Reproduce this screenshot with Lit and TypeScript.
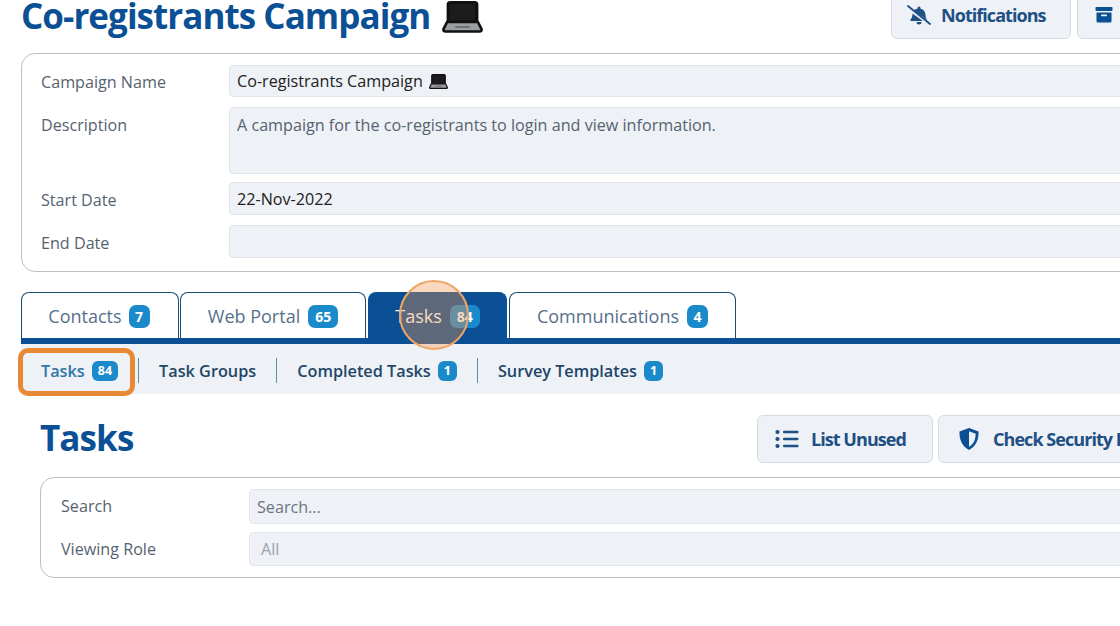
import { LitElement, html, css } from "lit";
import { customElement } from "lit/decorators.js";

const laptop = (w: number, h: number) => html`<svg class="laptop" width=${w} height=${h} viewBox="0 0 40 32" preserveAspectRatio="none">
  <path d="M6 3.500 Q6 1.500 8 1.500 H32 Q34 1.500 34 3.500 V21 H6 Z" fill="#1c1c1c" stroke="#111" stroke-width="3"/>
  <path d="M5 21 H35 L38.500 28 Q39 30.500 36.500 30.500 H3.500 Q1 30.500 1.500 28 Z" fill="#9a9da1" stroke="#111" stroke-width="2.600"/>
  <rect x="13" y="25" width="14" height="2" fill="#6d7074"/>
</svg>`;

const bellSlash = html`<svg width="24" height="20" viewBox="0 0 24 20">
  <path d="M12 1.500a1.500 1.500 0 0 1 1.500 1.500v.7c3 .6 5 3.200 5 6.300 0 2 .5 3.500 1.900 5.200L6.500 5.600A6.600 6.600 0 0 1 10.500 3.700V3A1.500 1.500 0 0 1 12 1.500Z" fill="#1e4f85"/>
  <path d="M5.500 8.500 15.800 16H4.200c-.9 0-1.200-1-.6-1.600 1.300-1.400 1.900-3 1.900-5.900Z" fill="#1e4f85"/>
  <path d="M9.500 17h5a2.500 2.500 0 0 1-5 0Z" fill="#1e4f85"/>
  <path d="M1 1 23 19" stroke="#1e4f85" stroke-width="1.800" stroke-linecap="round"/>
</svg>`;

const archive = html`<svg width="18" height="18" viewBox="0 0 18 18">
  <rect x="0.500" y="1" width="17" height="4" rx="0.800" fill="#0b4f94"/>
  <path d="M1.500 6.500h15V15a1.500 1.500 0 0 1-1.500 1.500H3A1.500 1.500 0 0 1 1.500 15Z" fill="#0b4f94"/>
  <rect x="6" y="8.500" width="6" height="1.700" rx="0.800" fill="#eef1f6"/>
</svg>`;

const listIcon = html`<svg width="24" height="20" viewBox="0 0 24 20">
  <circle cx="2.500" cy="3" r="2.100" fill="#1e4f85"/><circle cx="2.500" cy="10" r="2.100" fill="#1e4f85"/><circle cx="2.500" cy="17" r="2.100" fill="#1e4f85"/>
  <rect x="8" y="1.700" width="15.500" height="2.500" rx="1" fill="#1e4f85"/><rect x="8" y="8.700" width="15.500" height="2.500" rx="1" fill="#1e4f85"/><rect x="8" y="15.700" width="15.500" height="2.500" rx="1" fill="#1e4f85"/>
</svg>`;

const shield = html`<svg width="22" height="24" viewBox="0 0 22 24">
  <path d="M11 1 20.500 4.500C20.800 12 18.500 19 11 23 3.500 19 1.200 12 1.500 4.500Z" fill="#0b4f94"/>
  <path d="M11 4.200 17.700 6.700C17.600 12 16 16.800 11 19.800Z" fill="#eef1f6"/>
</svg>`;

@customElement("app-root")
export class AppRoot extends LitElement {
  static styles = css`
    :host {
      display: block;
      width: 1120px;
      height: 626px;
      overflow: hidden;
      background: #fff;
      font-family: "Open Sans", "Noto Sans", sans-serif;
      color: #4f5f70;
      position: relative;
    }
    .page { width: 1300px; padding: 0 0 0 21px; box-sizing: border-box; margin-top: -15px; }
    .head { display: flex; justify-content: space-between; height: 68px; }
    .title { margin: 0; height: 60px; font-size: 35px; font-weight: 700; color: #0b4f94; letter-spacing: -0.95px; display: flex; align-items: center; gap: 12px; white-space: nowrap; }
    .title .laptop { margin-top: 3px; }
    .actions { display: flex; gap: 6px; align-items: flex-start; }
    .head .actions { margin-top: 5px; }
    .btn {
      display: flex; align-items: center; box-sizing: border-box; background: #eef1f6;
      border: 1px solid #d5dbe3; border-radius: 6px; color: #1e4f85; font-weight: 700;
      font-size: 18px; letter-spacing: -0.95px; gap: 10px; white-space: nowrap;
    }
    .head .btn { height: 49px; padding: 0 0 0 15px; }
    .head .btn.n { width: 180px; }
    .head .btn.a { width: 223px; padding-left: 17px; }
    .card { border: 1px solid #b9c0c7; border-radius: 14px; box-sizing: border-box; background: #fff; }
    .campaign { height: 219px; padding: 11px 20px 0 19px; display: grid; grid-template-columns: 188px 1fr; grid-template-rows: 42px 75px 43px 33px; }
    .lbl { font-size: 16.150px; line-height: 34px; color: #56636f; }
    .lbl.low { padding-top: 1px; }
    .field { background: #eef1f6; border: 1px solid #e2e6ec; border-radius: 4px; box-sizing: border-box; font-size: 16.150px; padding: 0 7px; line-height: 30px; color: #222; display: flex; align-items: center; gap: 6px; white-space: nowrap; }
    .campaign .field { align-self: start; height: 33px; }
    .campaign .field.name { height: 32px; }
    .campaign .field.top { height: 67px; align-items: flex-start; color: #56636f; padding-top: 2px; }
    .tabs { display: flex; margin-top: 20px; height: 46px; align-items: stretch; gap: 2px; }
    .tab { box-sizing: border-box; border: 1px solid #1b4f72; border-bottom: none; border-radius: 8px 8px 0 0; background: #fff; display: flex; align-items: center; justify-content: center; gap: 8px; font-size: 18px; color: #55708c; padding-top: 1px; }
    .tab.t1 { width: 158px; gap: 7px; padding-right: 2px; }
    .tab.t2 { width: 186px; margin-left: -1px; }
    .tab.t3 { width: 139px; background: #0b4f94; border-color: #0b4f94; color: #fff; }
    .tab.t4 { width: 227px; }
    .badge { background: #1b8acb; color: #fff; font-weight: 700; font-size: 14px; border-radius: 7px; height: 23px; padding: 0 7px; line-height: 23px; display: inline-block; text-align: center; }
    .tab.t1 .badge, .tab.t4 .badge { padding: 0 6.500px; }
    .sub .badge { font-size: 12.500px; height: 20px; line-height: 20px; padding: 0 6px; border-radius: 6px; }
    .bar { height: 6px; background: #0b4f94; }
    .sub { height: 50px; box-sizing: border-box; padding: 2px 0 0 20px; background: #eef1f6; display: flex; align-items: center; font-size: 16.250px; font-weight: 600; color: #1e4667; position: relative; }
    .item { display: flex; align-items: center; gap: 7px; box-sizing: border-box; padding: 2px 20px 0 0; margin-right: 20px; height: 25px; border-right: 1px solid #5b8fae; white-space: nowrap; }
    .item.first { color: #2f76a8; }
    .item.last { border-right: none; }
    .highlight { position: absolute; left: -3px; top: 4px; width: 117px; height: 48px; box-sizing: border-box; border: 5px solid #e88a35; border-radius: 10px; }
    .content { padding-left: 19px; }
    .sec { display: flex; justify-content: space-between; height: 83px; padding-top: 21px; box-sizing: border-box; }
    .sec h2 { margin: 0; color: #0b4f94; font-size: 35px; font-weight: 700; letter-spacing: -0.900px; line-height: 46px; }
    .sec .actions { gap: 5px; }
    .sec .btn { height: 48px; padding: 0 0 0 17px; }
    .sec .btn.l { width: 176px; gap: 12px; }
    .sec .btn.c { width: 362px; padding-left: 19px; gap: 13px; }
    .search { height: 101px; padding: 11px 20px 0; display: grid; grid-template-columns: 188px 1fr; row-gap: 8px; grid-template-rows: 35px 34px; }
    .search .field { color: #6a7680; }
    .search .field.dis { color: #9aa2aa; padding-left: 11px; }
    .circle { position: absolute; left: 399px; top: 280px; width: 70px; height: 70px; box-sizing: border-box; border-radius: 50%; border: 2px solid #f0a566; background: rgba(240, 150, 80, 0.36); }
  `;

  render() {
    return html`
      <div class="page">
        <div class="head">
          <h1 class="title">Co-registrants Campaign ${laptop(41, 32)}</h1>
          <div class="actions">
            <div class="btn n">${bellSlash} Notifications</div>
            <div class="btn a">${archive}</div>
          </div>
        </div>
        <div class="card campaign">
          <div class="lbl">Campaign Name</div>
          <div class="field name">Co-registrants Campaign ${laptop(19, 15)}</div>
          <div class="lbl low">Description</div>
          <div class="field top">A campaign for the co-registrants to login and view information.</div>
          <div class="lbl low">Start Date</div>
          <div class="field">22-Nov-2022</div>
          <div class="lbl low">End Date</div>
          <div class="field"></div>
        </div>
        <div class="tabs">
          <div class="tab t1">Contacts <span class="badge">7</span></div>
          <div class="tab t2">Web Portal <span class="badge">65</span></div>
          <div class="tab t3">Tasks <span class="badge">84</span></div>
          <div class="tab t4">Communications <span class="badge">4</span></div>
        </div>
        <div class="bar"></div>
        <div class="sub">
          <span class="item first">Tasks <span class="badge">84</span></span>
          <span class="item">Task Groups</span>
          <span class="item">Completed Tasks <span class="badge">1</span></span>
          <span class="item last">Survey Templates <span class="badge">1</span></span>
          <div class="highlight"></div>
        </div>
        <div class="content">
          <div class="sec">
            <h2>Tasks</h2>
            <div class="actions">
              <div class="btn l">${listIcon} List Unused</div>
              <div class="btn c">${shield} Check Security Issues</div>
            </div>
          </div>
          <div class="card search">
            <div class="lbl">Search</div>
            <div class="field">Search...</div>
            <div class="lbl">Viewing Role</div>
            <div class="field dis">All</div>
          </div>
        </div>
      </div>
      <div class="circle"></div>
    `;
  }
}
